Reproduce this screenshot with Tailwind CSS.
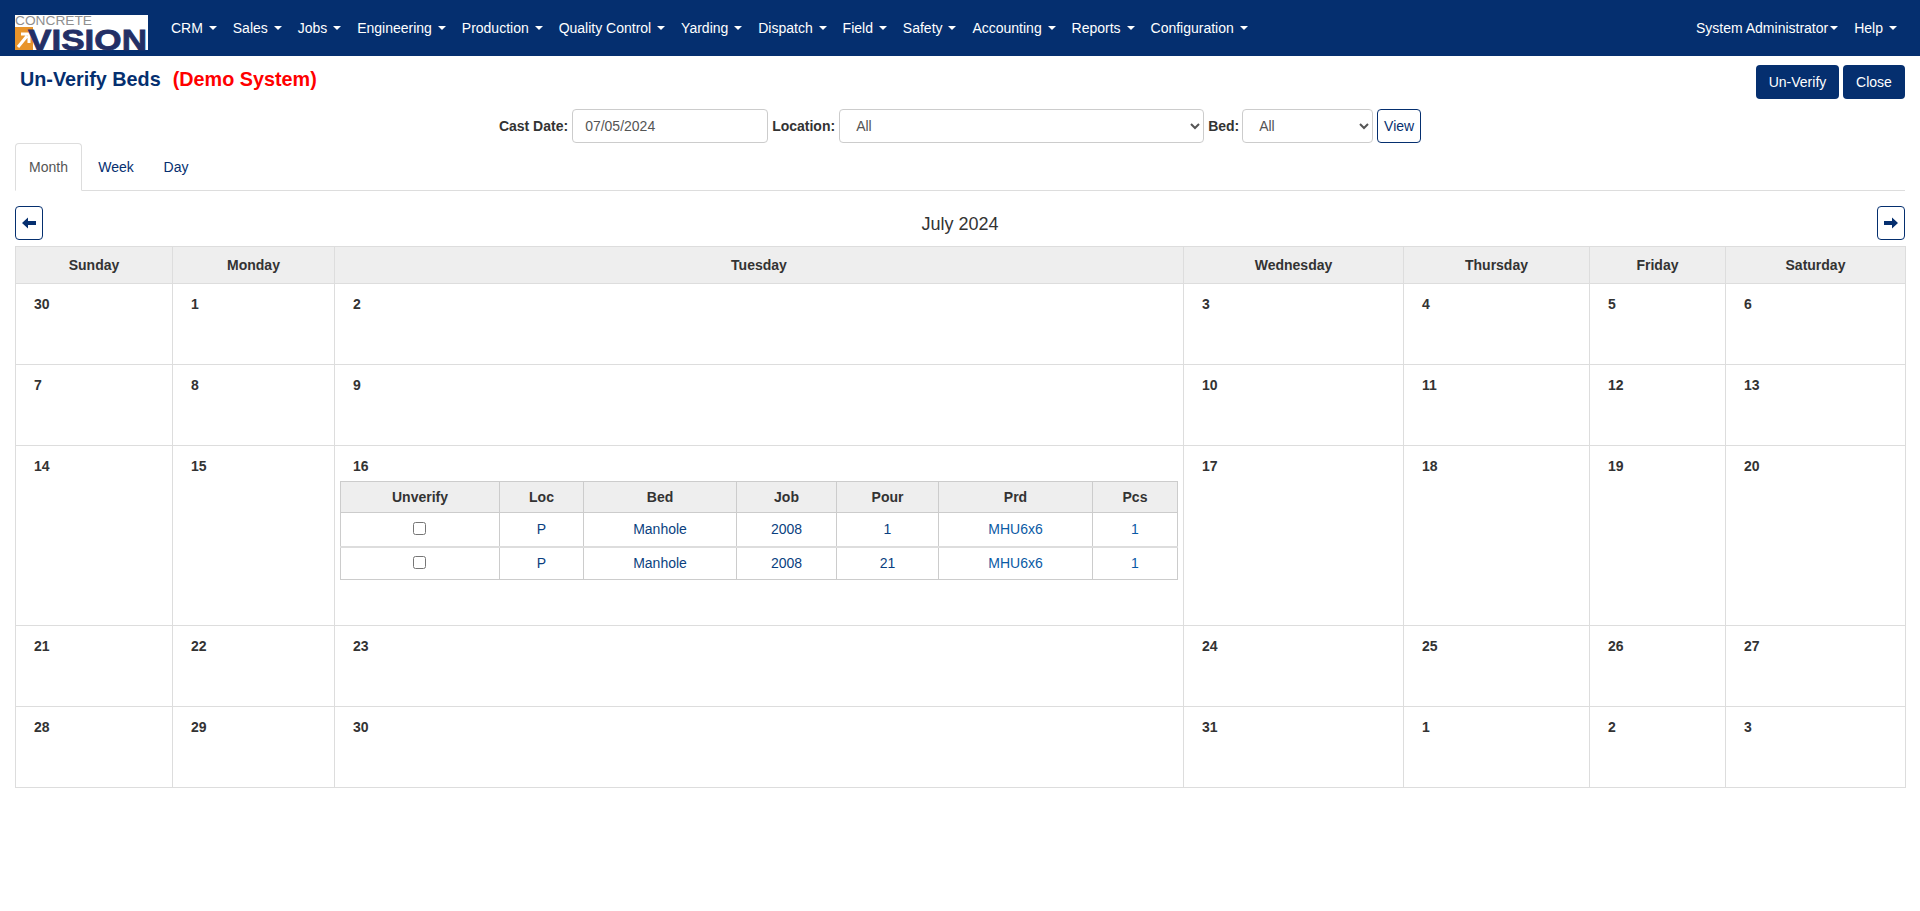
<!DOCTYPE html>
<html lang="en">
<head>
    <meta charset="UTF-8">
    <meta name="viewport" content="width=device-width, initial-scale=1.0">
    <title>Un-Verify Beds</title>
    <script src="https://cdn.jsdelivr.net/npm/@tailwindcss/browser@4"></script>
</head>
<body class="bg-white font-['Liberation_Sans',Arial,sans-serif] text-[14px] text-[#333]">
    <!-- top nav -->
    <nav class="h-14 bg-[#052f6f] flex items-center pl-[15px] pr-[15px] text-white">
        <svg class="w-[133px] h-[35px] mr-[15px] mt-[9px] shrink-0 overflow-visible" viewBox="0 0 133 35">
            <rect width="133" height="35" fill="#fff"/>
            <rect x="0" y="12" width="18" height="23" fill="#e8942a"/>
            <path d="M3 32 L12 21 M6 19 H14 V28" stroke="#fff" stroke-width="3" fill="none"/>
            <text x="0" y="10" font-size="13.5" fill="#8f8f8f" textLength="77" lengthAdjust="spacingAndGlyphs">CONCRETE</text>
            <text x="13" y="34.5" font-size="30" font-weight="700" fill="#232f66" stroke="#232f66" stroke-width="0.8" textLength="119" lengthAdjust="spacingAndGlyphs">VISION</text>
        </svg>
        <a class="flex items-center px-2">CRM<span class="ml-[5.9px] w-0 h-0 border-x-[4px] border-t-[4px] border-x-transparent border-t-white"></span></a>
        <a class="flex items-center px-2">Sales<span class="ml-[5.9px] w-0 h-0 border-x-[4px] border-t-[4px] border-x-transparent border-t-white"></span></a>
        <a class="flex items-center px-2">Jobs<span class="ml-[5.9px] w-0 h-0 border-x-[4px] border-t-[4px] border-x-transparent border-t-white"></span></a>
        <a class="flex items-center px-2">Engineering<span class="ml-[5.9px] w-0 h-0 border-x-[4px] border-t-[4px] border-x-transparent border-t-white"></span></a>
        <a class="flex items-center px-2">Production<span class="ml-[5.9px] w-0 h-0 border-x-[4px] border-t-[4px] border-x-transparent border-t-white"></span></a>
        <a class="flex items-center px-2">Quality Control<span class="ml-[5.9px] w-0 h-0 border-x-[4px] border-t-[4px] border-x-transparent border-t-white"></span></a>
        <a class="flex items-center px-2">Yarding<span class="ml-[5.9px] w-0 h-0 border-x-[4px] border-t-[4px] border-x-transparent border-t-white"></span></a>
        <a class="flex items-center px-2">Dispatch<span class="ml-[5.9px] w-0 h-0 border-x-[4px] border-t-[4px] border-x-transparent border-t-white"></span></a>
        <a class="flex items-center px-2">Field<span class="ml-[5.9px] w-0 h-0 border-x-[4px] border-t-[4px] border-x-transparent border-t-white"></span></a>
        <a class="flex items-center px-2">Safety<span class="ml-[5.9px] w-0 h-0 border-x-[4px] border-t-[4px] border-x-transparent border-t-white"></span></a>
        <a class="flex items-center px-2">Accounting<span class="ml-[5.9px] w-0 h-0 border-x-[4px] border-t-[4px] border-x-transparent border-t-white"></span></a>
        <a class="flex items-center px-2">Reports<span class="ml-[5.9px] w-0 h-0 border-x-[4px] border-t-[4px] border-x-transparent border-t-white"></span></a>
        <a class="flex items-center px-2">Configuration<span class="ml-[5.9px] w-0 h-0 border-x-[4px] border-t-[4px] border-x-transparent border-t-white"></span></a>
        <div class="ml-auto flex items-center">
            <a class="flex items-center px-2">System Administrator<span class="ml-[2px] w-0 h-0 border-x-[4px] border-t-[4px] border-x-transparent border-t-white"></span></a>
            <a class="flex items-center px-2">Help<span class="ml-[6px] w-0 h-0 border-x-[4px] border-t-[4px] border-x-transparent border-t-white"></span></a>
        </div>
    </nav>

    <div class="px-[15px]">
        <!-- title + actions -->
        <div class="flex justify-between items-start h-[53px] pt-[9px]">
            <h1 class="pl-[5px] pt-[3px] text-[19.8px] leading-[22px] font-bold text-[#052f6f]">Un-Verify Beds<span class="ml-[12px] text-[#ff0000]">(Demo System)</span></h1>
            <div class="flex gap-1">
                <button class="h-[34px] w-[83px] rounded bg-[#052f6f] text-white">Un-Verify</button>
                <button class="h-[34px] w-[62px] rounded bg-[#052f6f] text-white">Close</button>
            </div>
        </div>

        <!-- filters -->
        <div class="flex justify-center items-center h-[34px] gap-1">
            <label class="font-bold text-[#333]">Cast Date:</label>
            <input type="text" value="07/05/2024" class="w-[196px] h-[34px] px-3 border border-[#ccc] rounded text-[#555] text-[14px]">
            <label class="font-bold text-[#333]">Location:</label>
            <select class="w-[365px] h-[34px] px-3 border border-[#ccc] rounded text-[#555] text-[14px] bg-white appearance-auto"><option>All</option></select>
            <label class="w-[30px] whitespace-nowrap font-bold text-[#333]">Bed:</label>
            <select class="w-[131px] h-[34px] px-3 border border-[#ccc] rounded text-[#555] text-[14px] bg-white appearance-auto"><option>All</option></select>
            <button class="w-[44px] h-[34px] border border-[#052f6f] rounded text-[#052f6f] text-[14px]">View</button>
        </div>

        <!-- tabs -->
        <div class="flex h-[48px] border-b border-[#ddd] mb-[15px]">
            <a class="w-[67px] h-[48px] flex items-center justify-center border border-[#ddd] border-b-white rounded-t bg-white text-[#555]">Month</a>
            <a class="w-[68px] flex items-center justify-center pt-[1px] text-[#052f6f]">Week</a>
            <a class="w-[52px] flex items-center justify-center pt-[1px] text-[#052f6f]">Day</a>
        </div>

        <!-- calendar header -->
        <div class="flex justify-between items-center h-[34px] mb-[6px]">
            <button class="w-[28px] h-[34px] flex items-center justify-center border border-[#052f6f] rounded">
                <svg class="w-[14px] h-[12px]" viewBox="0 0 14 12"><path d="M0 6 L6 0.5 V4 H14 V8 H6 V11.5 Z" fill="#052f6f"/></svg>
            </button>
            <span class="pt-[2px] text-[18px] text-[#333]">July 2024</span>
            <button class="w-[28px] h-[34px] flex items-center justify-center border border-[#052f6f] rounded">
                <svg class="w-[14px] h-[12px]" viewBox="0 0 14 12"><path d="M14 6 L8 0.5 V4 H0 V8 H8 V11.5 Z" fill="#052f6f"/></svg>
            </button>
        </div>

        <!-- month grid -->
        <table class="w-[1890px] table-fixed border-collapse">
            <colgroup>
                <col class="w-[157px]"><col class="w-[162px]"><col class="w-[849px]"><col class="w-[220px]"><col class="w-[186px]"><col class="w-[136px]"><col class="w-[180px]">
            </colgroup>
            <thead>
                <tr class="h-[37px] bg-[#eee] font-bold text-[#333]">
                    <th class="border border-[#ddd]">Sunday</th>
                    <th class="border border-[#ddd]">Monday</th>
                    <th class="border border-[#ddd]">Tuesday</th>
                    <th class="border border-[#ddd]">Wednesday</th>
                    <th class="border border-[#ddd]">Thursday</th>
                    <th class="border border-[#ddd]">Friday</th>
                    <th class="border border-[#ddd]">Saturday</th>
                </tr>
            </thead>
            <tbody class="font-bold text-[#333]">
                <tr class="h-[81px] align-top">
                    <td class="border border-[#ddd] pt-[10px] pl-[18px]">30</td>
                    <td class="border border-[#ddd] pt-[10px] pl-[18px]">1</td>
                    <td class="border border-[#ddd] pt-[10px] pl-[18px]">2</td>
                    <td class="border border-[#ddd] pt-[10px] pl-[18px]">3</td>
                    <td class="border border-[#ddd] pt-[10px] pl-[18px]">4</td>
                    <td class="border border-[#ddd] pt-[10px] pl-[18px]">5</td>
                    <td class="border border-[#ddd] pt-[10px] pl-[18px]">6</td>
                </tr>
                <tr class="h-[81px] align-top">
                    <td class="border border-[#ddd] pt-[10px] pl-[18px]">7</td>
                    <td class="border border-[#ddd] pt-[10px] pl-[18px]">8</td>
                    <td class="border border-[#ddd] pt-[10px] pl-[18px]">9</td>
                    <td class="border border-[#ddd] pt-[10px] pl-[18px]">10</td>
                    <td class="border border-[#ddd] pt-[10px] pl-[18px]">11</td>
                    <td class="border border-[#ddd] pt-[10px] pl-[18px]">12</td>
                    <td class="border border-[#ddd] pt-[10px] pl-[18px]">13</td>
                </tr>
                <tr class="h-[180px] align-top">
                    <td class="border border-[#ddd] pt-[10px] pl-[18px]">14</td>
                    <td class="border border-[#ddd] pt-[10px] pl-[18px]">15</td>
                    <td class="border border-[#ddd] pt-[10px] px-[5px]">
                        <div class="pl-[13px] h-[25px]">16</div>
                        <table class="w-[837px] table-fixed border-collapse text-center font-normal text-[#0a3f80]">
                            <colgroup>
                                <col class="w-[159px]"><col class="w-[84px]"><col class="w-[153px]"><col class="w-[100px]"><col class="w-[102px]"><col class="w-[154px]"><col class="w-[85px]">
                            </colgroup>
                            <tr class="h-[31px] bg-[#eee] font-bold text-[#333]">
                                <th class="border border-[#ccc]">Unverify</th>
                                <th class="border border-[#ccc]">Loc</th>
                                <th class="border border-[#ccc]">Bed</th>
                                <th class="border border-[#ccc]">Job</th>
                                <th class="border border-[#ccc]">Pour</th>
                                <th class="border border-[#ccc]">Prd</th>
                                <th class="border border-[#ccc]">Pcs</th>
                            </tr>
                            <tr class="h-[34px]">
                                <td class="border border-[#ccc] border-b-2 border-b-[#ddd]"><input type="checkbox" class="appearance-auto align-middle w-[13px] h-[13px] -mt-[3px] -ml-[1px]"></td>
                                <td class="border border-[#ccc] border-b-2 border-b-[#ddd]">P</td>
                                <td class="border border-[#ccc] border-b-2 border-b-[#ddd]">Manhole</td>
                                <td class="border border-[#ccc] border-b-2 border-b-[#ddd]">2008</td>
                                <td class="border border-[#ccc] border-b-2 border-b-[#ddd]">1</td>
                                <td class="border border-[#ccc] border-b-2 border-b-[#ddd] text-[#0a5aa5]">MHU6x6</td>
                                <td class="border border-[#ccc] border-b-2 border-b-[#ddd] text-[#0a5aa5]">1</td>
                            </tr>
                            <tr class="h-[33px]">
                                <td class="border border-[#ccc]"><input type="checkbox" class="appearance-auto align-middle w-[13px] h-[13px] -mt-[3px] -ml-[1px]"></td>
                                <td class="border border-[#ccc]">P</td>
                                <td class="border border-[#ccc]">Manhole</td>
                                <td class="border border-[#ccc]">2008</td>
                                <td class="border border-[#ccc]">21</td>
                                <td class="border border-[#ccc] text-[#0a5aa5]">MHU6x6</td>
                                <td class="border border-[#ccc] text-[#0a5aa5]">1</td>
                            </tr>
                        </table>
                    </td>
                    <td class="border border-[#ddd] pt-[10px] pl-[18px]">17</td>
                    <td class="border border-[#ddd] pt-[10px] pl-[18px]">18</td>
                    <td class="border border-[#ddd] pt-[10px] pl-[18px]">19</td>
                    <td class="border border-[#ddd] pt-[10px] pl-[18px]">20</td>
                </tr>
                <tr class="h-[81px] align-top">
                    <td class="border border-[#ddd] pt-[10px] pl-[18px]">21</td>
                    <td class="border border-[#ddd] pt-[10px] pl-[18px]">22</td>
                    <td class="border border-[#ddd] pt-[10px] pl-[18px]">23</td>
                    <td class="border border-[#ddd] pt-[10px] pl-[18px]">24</td>
                    <td class="border border-[#ddd] pt-[10px] pl-[18px]">25</td>
                    <td class="border border-[#ddd] pt-[10px] pl-[18px]">26</td>
                    <td class="border border-[#ddd] pt-[10px] pl-[18px]">27</td>
                </tr>
                <tr class="h-[81px] align-top">
                    <td class="border border-[#ddd] pt-[10px] pl-[18px]">28</td>
                    <td class="border border-[#ddd] pt-[10px] pl-[18px]">29</td>
                    <td class="border border-[#ddd] pt-[10px] pl-[18px]">30</td>
                    <td class="border border-[#ddd] pt-[10px] pl-[18px]">31</td>
                    <td class="border border-[#ddd] pt-[10px] pl-[18px]">1</td>
                    <td class="border border-[#ddd] pt-[10px] pl-[18px]">2</td>
                    <td class="border border-[#ddd] pt-[10px] pl-[18px]">3</td>
                </tr>
            </tbody>
        </table>
    </div>
</body>
</html>
